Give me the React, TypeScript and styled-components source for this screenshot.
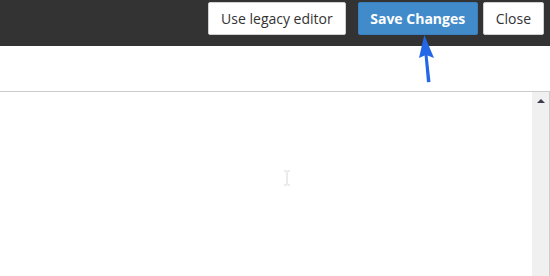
import styled, {createGlobalStyle} from "styled-components";

const GlobalStyle = createGlobalStyle`
  html, body {
    margin: 0;
    padding: 0;
    background: #fff;
    font-family: "Open Sans", "Liberation Sans", sans-serif;
  }
`

const Page = styled.div`
  position: relative;
  width: 550px;
  height: 276px;
  overflow: hidden;
  display: flex;
  flex-direction: column;
`

const TopBar = styled.header`
  height: 46px;
  box-sizing: border-box;
  background: #333;
  display: flex;
  justify-content: flex-end;
  align-items: flex-start;
  padding: 2px 6px 0 0;
`

const Button = styled.button<{ $primary?: boolean; $gap?: number }>`
  height: 33px;
  box-sizing: border-box;
  margin: 0 0 0 ${p => p.$gap ?? 0}px;
  padding: 0 ${p => (p.$primary ? 11.5 : 12)}px;
  border-radius: 2px;
  border: 1px solid ${p => (p.$primary ? "#3a80c0" : "#d0d0d0")};
  background: ${p => (p.$primary ? "#428bca" : "#fff")};
  color: ${p => (p.$primary ? "#fff" : "#333")};
  font-family: "Open Sans", "Liberation Sans", sans-serif;
  font-size: 14px;
  font-weight: ${p => (p.$primary ? 700 : 400)};
  cursor: pointer;
`

const ToolbarSpace = styled.div`
  height: 45px;
  background: #fff;
`

const Editor = styled.div`
  flex: 1;
  display: flex;
  border-top: 1px solid #ccc;
`

const EditArea = styled.div`
  flex: 1;
  position: relative;
  background: #fff;
`

const Scrollbar = styled.div`
  width: 17px;
  background: #f0f0f0;
  border-right: 1px solid #ccc;
  display: flex;
  justify-content: center;
  padding-top: 7px;
`

const ArrowUp = styled.div`
  width: 0;
  height: 0;
  border-left: 4px solid transparent;
  border-right: 4px solid transparent;
  border-bottom: 4px solid #3c3c4e;
`

const TextCursor = styled.svg`
  position: absolute;
  left: 283px;
  top: 78px;
`

const Pointer = styled.svg`
  position: absolute;
  left: 0;
  top: 0;
  pointer-events: none;
`

const App = () => {
    return (
        <Page>
            <GlobalStyle/>
            <TopBar>
                <Button>Use legacy editor</Button>
                <Button $primary $gap={12}>Save Changes</Button>
                <Button $gap={5}>Close</Button>
            </TopBar>
            <ToolbarSpace/>
            <Editor>
                <EditArea>
                    <TextCursor width="8" height="16" viewBox="0 0 8 16">
                        <path d="M1 1h2.5M4.5 1H7M4 1.5v13M1 15h2.5M4.5 15H7" stroke="#d6d6d6" strokeWidth="1" fill="none"/>
                    </TextCursor>
                </EditArea>
                <Scrollbar>
                    <ArrowUp/>
                </Scrollbar>
            </Editor>
            <Pointer width="550" height="276" viewBox="0 0 550 276">
                <path d="M424.3 35 L434 58 L427.6 55.5 L430.5 82 L427 82.3 L424.6 55.6 L419 58 Z" fill="#2467e6"/>
            </Pointer>
        </Page>
    )
}

export default App
